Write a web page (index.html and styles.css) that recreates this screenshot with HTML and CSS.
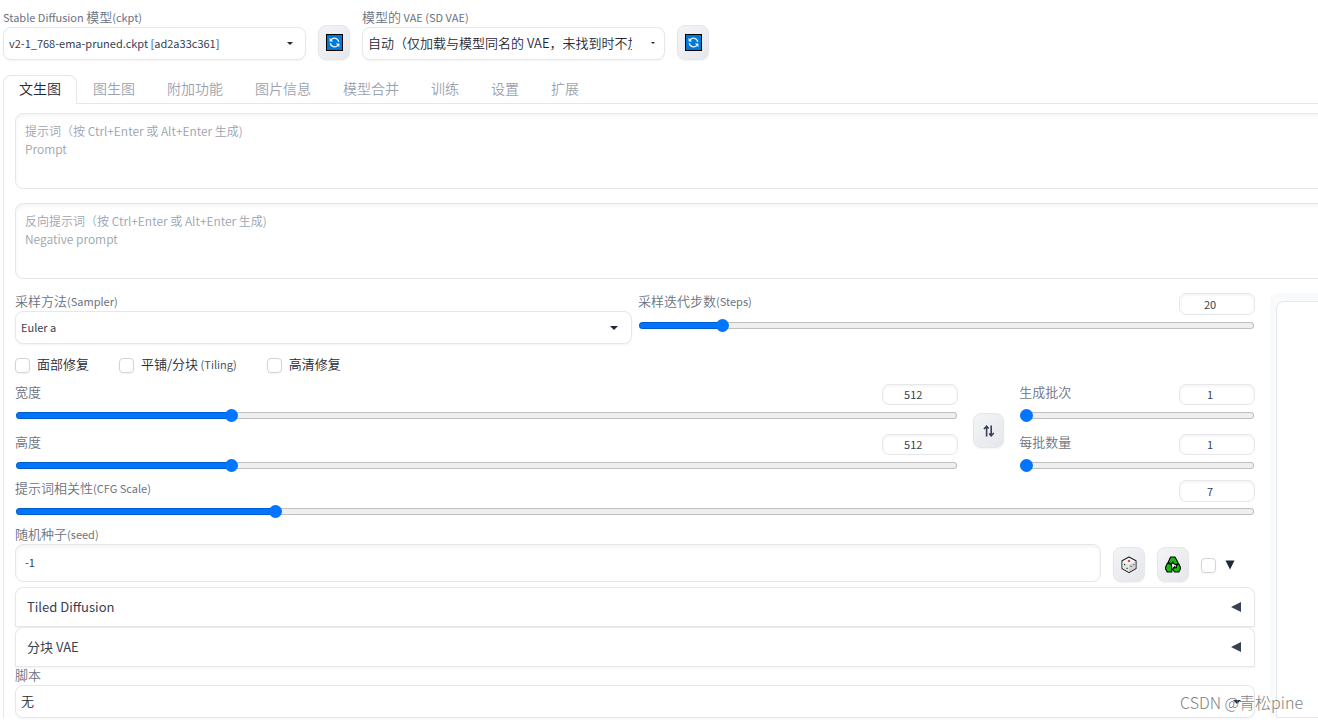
FILE: index.html
```html
<!DOCTYPE html>
<html lang="zh-CN">
<head>
<meta charset="utf-8">
<title>Stable Diffusion</title>
<link rel="stylesheet" href="styles.css">
</head>
<body>
<svg class="sprite" aria-hidden="true">
  <symbol id="refresh" viewBox="0 0 17 17">
    <rect x="0.5" y="0.5" width="16" height="16" fill="#0078d7" stroke="#000"/>
    <path d="M5 5.9A4.3 4.3 0 0 1 12.7 7.8M12 11.1A4.3 4.3 0 0 1 4.3 9.2" fill="none" stroke="#e8f3fc" stroke-width="1.3"/>
    <path d="M3.6 3.8V7.4H7.2ZM13.4 13.2V9.6H9.8Z" fill="#e8f3fc"/>
  </symbol>
</svg>
<div class="app">
  <header class="models">
    <div class="field model">
      <label for="ckpt"><span class="latin">Stable Diffusion </span>模型<span class="latin">(ckpt)</span></label>
      <div class="select"><select id="ckpt" class="latin"><option>v2-1_768-ema-pruned.ckpt [ad2a33c361]</option></select></div>
    </div>
    <button class="tool" aria-label="刷新模型"><svg width="17" height="17"><use href="#refresh"/></svg></button>
    <div class="field model">
      <label for="vae">模型的<span class="latin"> VAE (SD VAE)</span></label>
      <div class="select small"><select id="vae"><option>自动（仅加载与模型同名的 VAE，未找到时不加载）</option></select></div>
    </div>
    <button class="tool" aria-label="刷新 VAE"><svg width="17" height="17"><use href="#refresh"/></svg></button>
  </header>

  <nav class="tabs">
    <button class="tab active">文生图</button>
    <button class="tab">图生图</button>
    <button class="tab">附加功能</button>
    <button class="tab">图片信息</button>
    <button class="tab">模型合并</button>
    <button class="tab">训练</button>
    <button class="tab">设置</button>
    <button class="tab">扩展</button>
  </nav>

  <main class="panel">
    <textarea class="prompt" aria-label="提示词" placeholder="提示词（按 Ctrl+Enter 或 Alt+Enter 生成)&#10;Prompt"></textarea>
    <textarea class="prompt" aria-label="反向提示词" placeholder="反向提示词（按 Ctrl+Enter 或 Alt+Enter 生成)&#10;Negative prompt"></textarea>

    <div class="columns">
      <section class="settings">
        <div class="sampling">
          <div class="field">
            <label for="sampler">采样方法<span class="latin">(Sampler)</span></label>
            <div class="select"><select id="sampler" class="latin"><option>Euler a</option></select></div>
          </div>
          <div class="slider steps">
            <div class="head"><label for="steps">采样迭代步数<span class="latin">(Steps)</span></label><input type="number" aria-label="采样迭代步数" value="20"></div>
            <input id="steps" type="range" min="1" max="150" value="20" style="--fill:13.5%">
          </div>
        </div>

        <div class="checks">
          <label><input type="checkbox"><span>面部修复</span></label>
          <label><input type="checkbox"><span>平铺/分块<span class="latin"> (Tiling)</span></span></label>
          <label><input type="checkbox"><span>高清修复</span></label>
        </div>

        <div class="dimensions">
          <div class="stack size">
            <div class="slider">
              <div class="head"><label for="width">宽度</label><input type="number" aria-label="宽度" value="512"></div>
              <input id="width" type="range" min="64" max="2048" value="512" style="--fill:23%">
            </div>
            <div class="slider">
              <div class="head"><label for="height">高度</label><input type="number" aria-label="高度" value="512"></div>
              <input id="height" type="range" min="64" max="2048" value="512" style="--fill:23%">
            </div>
          </div>
          <button class="tool swap" aria-label="交换宽高">
            <svg width="12" height="12" viewBox="0 0 12 12" fill="none" stroke="#374151" stroke-width="1.6"><path d="M3.6 11.5V1.5M1 4L3.6 1.2L5.6 3.6M8.2 0.5v10M6.2 8.4l2 2.4L10.8 8"/></svg>
          </button>
          <div class="stack batch">
            <div class="slider">
              <div class="head"><label for="count">生成批次</label><input type="number" aria-label="生成批次" value="1"></div>
              <input id="count" type="range" min="1" max="100" value="1" style="--fill:0%">
            </div>
            <div class="slider">
              <div class="head"><label for="bsize">每批数量</label><input type="number" aria-label="每批数量" value="1"></div>
              <input id="bsize" type="range" min="1" max="8" value="1" style="--fill:0%">
            </div>
          </div>
        </div>

        <div class="slider cfg">
          <div class="head"><label for="cfg">提示词相关性<span class="latin">(CFG Scale)</span></label><input type="number" aria-label="CFG Scale" value="7"></div>
          <input id="cfg" type="range" min="1" max="30" step="0.5" value="7" style="--fill:21%">
        </div>

        <div class="seed">
          <div class="field">
            <label for="seed">随机种子<span class="latin">(seed)</span></label>
            <input id="seed" class="seed-input" type="text" value="-1">
          </div>
          <button class="tool" aria-label="随机">
            <svg width="16" height="18" viewBox="0 0 16 18"><path d="M8 1L15 4.8V12.6L8 16.6L1 12.6V4.8Z" fill="#fafafa" stroke="#222" stroke-width="1.1" stroke-linejoin="round"/><path d="M1.6 5.4L8 8.6V16L1.6 12.3Z" fill="#e6e6e6"/><path d="M14.4 5.4L8 8.6V16L14.4 12.3Z" fill="#d4d4d4"/><circle cx="8" cy="5" r="1.3" fill="#e0484f"/><path d="M3 8h1.2v1.2H3zM5.5 11.7h1.2v1.2H5.5zM9.6 9.8h1v1.1h-1zM12.4 8.2h1v1.1h-1z" fill="#333"/></svg>
          </button>
          <button class="tool" aria-label="重用种子">
            <svg width="16" height="18" viewBox="0 0 16 18" stroke="#000" stroke-width="1.1" stroke-linejoin="round" fill="#16b90c"><path d="M5.6 1H10L13 6.4L11.6 9L8.6 7.4L7.8 5.8L6.6 8.2L3.2 6.2Z"/><path d="M2.4 7L6.2 8.4L6.8 11.8V16H2.2L0.6 13V11.2Z"/><path d="M11.2 9.8L13.6 7.6L15.4 11.2V13L13.8 16H9.6L7.6 13.4L9.6 10.6V11.8H11.4Z"/></svg>
          </button>
          <label class="extra"><input type="checkbox" aria-label="附加种子"><svg width="10" height="10" viewBox="0 0 10 10"><path d="M0.5 0.5H9.5L5 9.5Z" fill="#1f2937"/></svg></label>
        </div>

        <button class="accordion first"><span>Tiled Diffusion</span><svg width="10" height="10" viewBox="0 0 10 10"><path d="M10 0V10L0 5Z"/></svg></button>
        <button class="accordion"><span>分块 VAE</span><svg width="10" height="10" viewBox="0 0 10 10"><path d="M10 0V10L0 5Z"/></svg></button>

        <div class="field">
          <label for="script">脚本</label>
          <div class="select"><select id="script"><option>无</option></select></div>
        </div>
      </section>
      <aside class="gallery"><div class="preview"></div></aside>
    </div>
  </main>
  <div class="watermark">CSDN @青松pine</div>
</div>
</body>
</html>
```
FILE: styles.css
```css
* { box-sizing: border-box; }

body {
  margin: 0;
  background: #fff;
  color: #1f2937;
  font-family: "Noto Sans CJK SC", "Noto Sans", sans-serif;
  font-size: 13px;
  font-weight: 350;
  line-height: 18px;
}

button, input, select, textarea { font: inherit; color: inherit; margin: 0; }

.sprite { position: absolute; width: 0; height: 0; }

.app {
  position: relative;
  height: 100vh;
  overflow: hidden;
  padding: 9px 0 0 3px;
}

.latin { font-size: 11px; font-weight: 400; }
select.latin { color: #374151; }
.checks .latin { color: #4b5563; }

.field { display: flex; flex-direction: column; min-width: 0; }
.field > label, .head label { color: #6b7280; height: 18px; line-height: 16px; white-space: nowrap; }

.models { display: flex; align-items: flex-end; gap: 12px; }
.model { width: 303px; }

.select { position: relative; }
.select::after {
  content: "";
  position: absolute;
  right: 14px;
  top: 15px;
  border: 4px solid transparent;
  border-top-color: #1f2937;
  border-bottom: 0;
}
.model .select::after { right: 13px; border-width: 3px 3px 0; }
.model .select.small::after { right: 10px; border-width: 2px 2px 0; }
.select select {
  display: block;
  width: 100%;
  height: 33px;
  padding: 0 38px 1px 5px;
  appearance: none;
  border: 1px solid #e5e7eb;
  border-radius: 8px;
  background: #fff;
  box-shadow: 0 1px 2px rgba(0, 0, 0, .05);
}
.select.small select { padding-right: 32px; }

.tool {
  display: flex;
  align-items: center;
  justify-content: center;
  flex: none;
  width: 32px;
  height: 35px;
  padding: 0;
  border: 1px solid #e5e7eb;
  border-radius: 8px;
  background: linear-gradient(135deg, #f3f4f6, #e5e7eb);
  box-shadow: 0 1px 2px rgba(0, 0, 0, .05);
}

.tabs { display: flex; margin-top: 15px; border-bottom: 1px solid #e5e7eb; }
.tab {
  height: 29px;
  margin-bottom: -1px;
  padding: 0 15px 5px;
  border: 1px solid transparent;
  border-bottom: 0;
  border-radius: 8px 8px 0 0;
  background: none;
  color: #9ca3af;
  font-size: 14px;
}
.tab.active { border-color: #e5e7eb; background: #fff; color: #1f2937; }

.panel {
  width: calc(100% + 20px);
  padding: 9px 0 0 11px;
  border-left: 1px solid #e5e7eb;
}

.prompt {
  display: block;
  width: 100%;
  height: 76px;
  margin-bottom: 14px;
  padding: 8px 9px;
  resize: none;
  border: 1px solid #e5e7eb;
  border-radius: 8px;
  box-shadow: inset 0 2px 4px rgba(0, 0, 0, .05);
  font-size: 12px;
}
.prompt::placeholder { color: #9ca3af; opacity: 1; }

.columns { display: flex; gap: 15px; }
.settings { flex: 1; min-width: 0; }
.gallery { flex: 0 0 68px; padding: 8px 0 0 6px; border-radius: 8px 0 0 0; background: #f9fafb; }
.preview { height: 100%; border: 1px solid #e5e7eb; border-radius: 8px 0 0 0; background: #fff; }

.sampling { display: flex; gap: 6px; }
.sampling > * { flex: 1; }

.head { display: flex; justify-content: space-between; height: 22px; }
.head input {
  width: 76px;
  height: 22px;
  padding: 0 14px 0 0;
  border: 1px solid #e5e7eb;
  border-radius: 7px;
  box-shadow: inset 0 1px 3px rgba(0, 0, 0, .06);
  color: #374151;
  font-size: 11px;
  font-weight: 400;
  text-align: center;
  appearance: textfield;
}
.head input::-webkit-inner-spin-button { display: none; }
.stack .head input { height: 21px; padding-bottom: 1px; }

input[type="range"] {
  display: block;
  width: calc(100% - 2px);
  height: 13px;
  margin: 3px 1px 0;
  appearance: none;
  background: none;
}
.steps input[type="range"] { margin-top: 4px; }
input[type="range"]::-webkit-slider-runnable-track {
  height: 7px;
  border: 1px solid rgba(0, 0, 0, .2);
  border-radius: 4px;
  background: linear-gradient(#0075ff, #0075ff) 0 0 / var(--fill) 100% no-repeat border-box #efefef;
}
input[type="range"]::-webkit-slider-thumb {
  appearance: none;
  width: 13px;
  height: 13px;
  margin: -4px -1px 0;
  border-radius: 50%;
  background: #0075ff;
}

input[type="checkbox"] {
  flex: none;
  width: 15px;
  height: 15px;
  appearance: none;
  border: 1px solid #d1d5db;
  border-radius: 4px;
  background: #fff;
  box-shadow: 0 1px 2px rgba(0, 0, 0, .05);
}

.checks { display: flex; gap: 30px; margin: 12px 0 10px; line-height: 16px; }
.checks label { display: flex; align-items: center; gap: 7px; height: 18px; }
.checks label > span { padding-bottom: 2px; }

.dimensions { display: flex; align-items: flex-end; gap: 15px; }
.stack { display: flex; flex-direction: column; gap: 12px; min-width: 0; }
.size { flex: 4; }
.batch { flex: 1; }
.swap { width: 31px; margin-bottom: 24px; }

.cfg { margin: 8px 0; }

.seed { display: flex; align-items: flex-end; gap: 12px; }
.seed .field { flex: 1; }
.seed-input {
  height: 38px;
  padding: 0 9px 2px;
  border: 1px solid #e5e7eb;
  border-radius: 8px;
  box-shadow: inset 0 2px 4px rgba(0, 0, 0, .05);
  color: #374151;
  font-size: 11px;
  font-weight: 400;
}
.extra { display: flex; align-items: center; gap: 9px; height: 34px; margin-right: 20px; }

.accordion {
  display: flex;
  align-items: center;
  justify-content: space-between;
  width: 100%;
  height: 40px;
  padding: 0 13px 0 11px;
  border: 1px solid #e5e7eb;
  border-radius: 8px 8px 0 0;
  background: #fff;
  box-shadow: 0 1px 2px rgba(0, 0, 0, .05);
  color: #374151;
  font-size: 13px;
  font-weight: 400;
}
.accordion.first { margin-top: 5px; }
.accordion svg { fill: #374151; }

.watermark {
  position: absolute;
  right: 15px;
  bottom: 7px;
  color: #808080;
  font-size: 16px;
  font-weight: 300;
  line-height: 22px;
}
```
